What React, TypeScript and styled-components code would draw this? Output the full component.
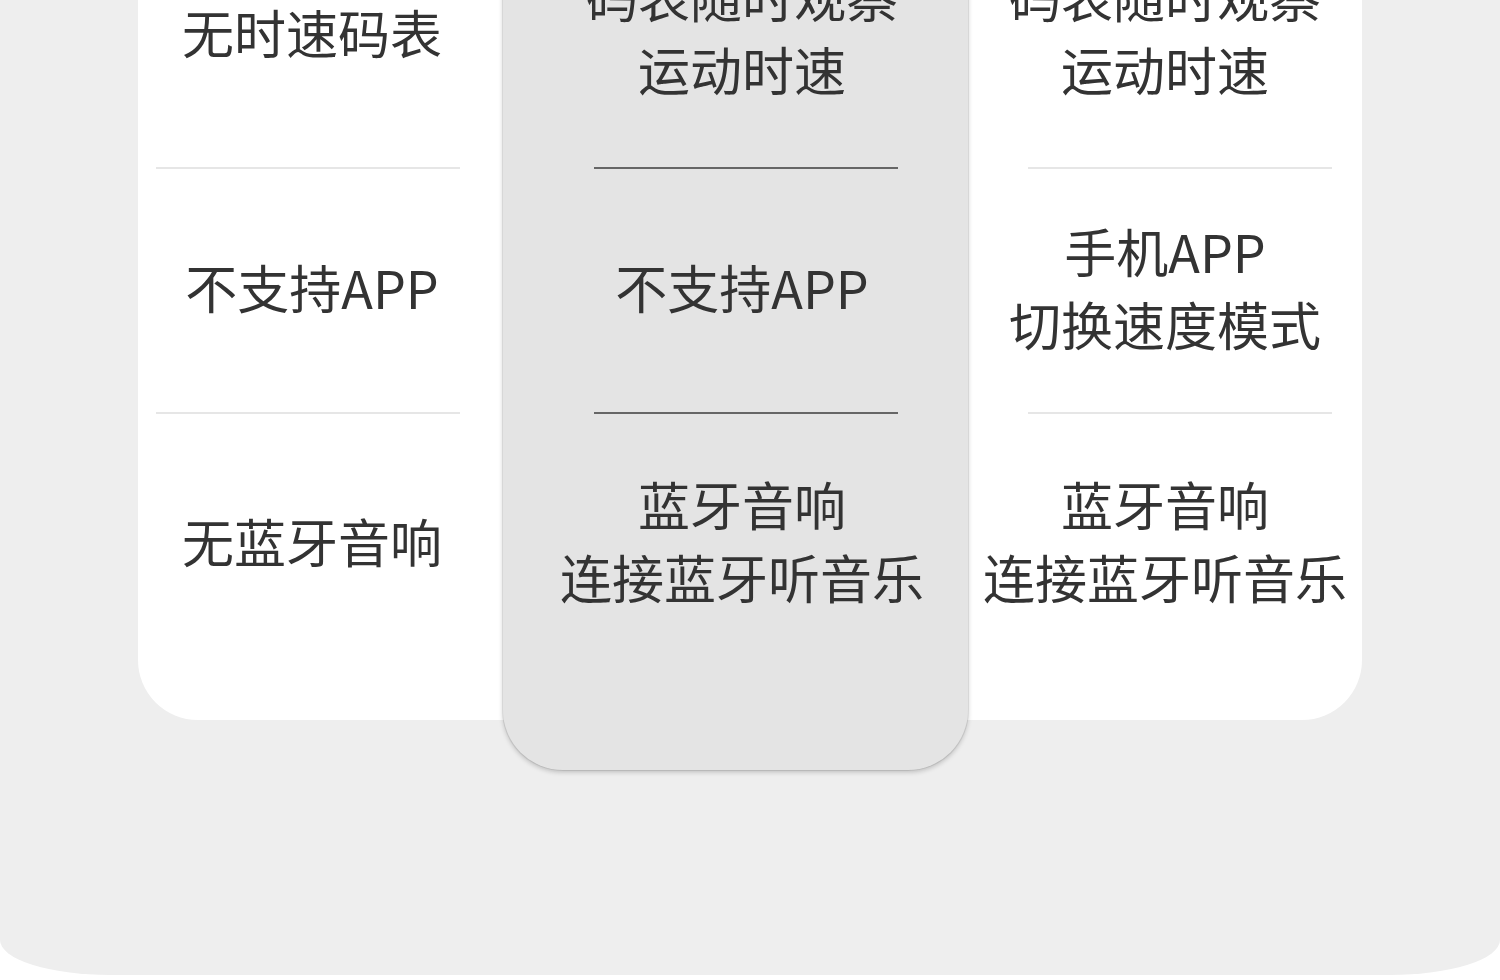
import React from "react";
import styled, { createGlobalStyle } from "styled-components";

type Feature = {
  key: string;
  width: number;
  lineLeft: number;
  shift: number;
  raised?: boolean;
  cells: string[][];
};

const ROW_HEIGHTS = [263, 243, 260];

const features: Feature[] = [
  {
    key: "basic",
    width: 365,
    lineLeft: 18,
    shift: 8,
    cells: [["无时速码表"], ["不支持APP"], ["无蓝牙音响"]],
  },
  {
    key: "plus",
    width: 465,
    lineLeft: 91,
    shift: -8,
    raised: true,
    cells: [
      ["码表随时观察", "运动时速"],
      ["不支持APP"],
      ["蓝牙音响", "连接蓝牙听音乐"],
    ],
  },
  {
    key: "pro",
    width: 394,
    lineLeft: 60,
    shift: -30,
    cells: [
      ["码表随时观察", "运动时速"],
      ["手机APP", "切换速度模式"],
      ["蓝牙音响", "连接蓝牙听音乐"],
    ],
  },
];

const GlobalStyle = createGlobalStyle`
  html, body {
    margin: 0;
    padding: 0;
    background: #ffffff;
  }
  body {
    font-family: "Noto Sans CJK SC", "Noto Sans", sans-serif;
    overflow: hidden;
  }
`;

export default function App() {
  return (
    <>
      <GlobalStyle />
      <Panel>
        <Card>
          {features.map((col) => (
            <Column key={col.key} $width={col.width} $raised={!!col.raised}>
              {col.cells.map((lines, i) => (
                <Cell
                  key={i}
                  $height={ROW_HEIGHTS[i]}
                  $lineLeft={col.lineLeft}
                  $last={i === col.cells.length - 1}
                  $raised={!!col.raised}
                >
                  <CellText $shift={col.shift}>
                    {lines.map((l) => (
                      <Line key={l}>{l}</Line>
                    ))}
                  </CellText>
                </Cell>
              ))}
            </Column>
          ))}
        </Card>
      </Panel>
    </>
  );
}

const Panel = styled.div`
  display: flex;
  flex-direction: column;
  background: #eeeeee;
  height: 975px;
  box-sizing: border-box;
  border-radius: 0 0 110px 110px / 0 0 35px 35px;
`;

const Card = styled.div`
  display: flex;
  align-items: stretch;
  width: 1224px;
  margin: -96px auto 0;
  padding-bottom: 46px;
  background: #ffffff;
  border-radius: 60px;
`;

const Column = styled.div<{ $width: number; $raised: boolean }>`
  display: flex;
  flex-direction: column;
  width: ${(p) => p.$width}px;
  flex-shrink: 0;
  ${(p) =>
    p.$raised &&
    `
    background: #e4e4e4;
    border-radius: 0 0 60px 60px;
    margin-bottom: -96px;
    box-shadow: 0 0 0 1px rgba(0, 0, 0, 0.07), 0 2px 5px rgba(0, 0, 0, 0.22);
  `}
`;

const Cell = styled.div<{
  $height: number;
  $lineLeft: number;
  $last: boolean;
  $raised: boolean;
}>`
  display: flex;
  flex-direction: column;
  box-sizing: border-box;
  height: ${(p) => p.$height + (p.$last ? 0 : 2)}px;
  margin-left: ${(p) => p.$lineLeft}px;
  width: 304px;
  justify-content: center;
  align-items: center;
  border-bottom: ${(p) =>
    p.$last ? "none" : `2px solid ${p.$raised ? "#666666" : "#e6e6e6"}`};
`;

const CellText = styled.div<{ $shift: number }>`
  display: flex;
  flex-direction: column;
  align-items: center;
  margin-left: ${(p) => (p.$shift > 0 ? p.$shift : 0)}px;
  margin-right: ${(p) => (p.$shift < 0 ? -p.$shift : 0)}px;
  margin-bottom: 8px;
  white-space: nowrap;
  color: #333333;
  font-size: 52px;
  line-height: 73px;
`;

const Line = styled.span`
  display: block;
`;
